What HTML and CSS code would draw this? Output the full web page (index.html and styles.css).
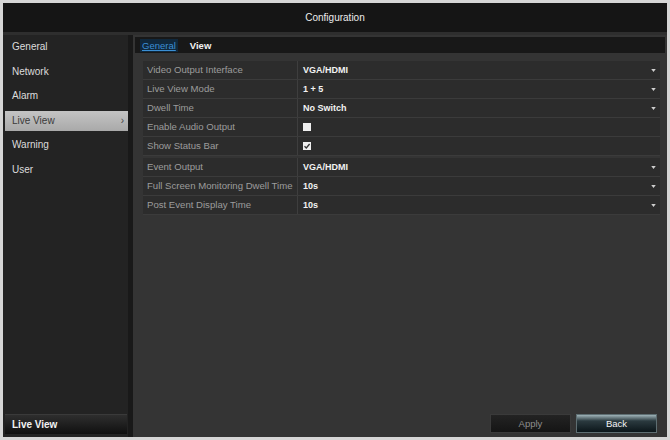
FILE: index.html
```html
<!DOCTYPE html>
<html>
<head>
<meta charset="utf-8">
<title>Configuration</title>
<link rel="stylesheet" href="styles.css">
</head>
<body>
<div class="app">
  <div class="titlebar">Configuration</div>
  <div class="body">
    <nav class="sidebar">
      <div class="nav-item">General</div>
      <div class="nav-item">Network</div>
      <div class="nav-item">Alarm</div>
      <div class="nav-item active">Live View<span class="caret">&#8250;</span></div>
      <div class="nav-item">Warning</div>
      <div class="nav-item">User</div>
      <div class="nav-footer">Live View</div>
    </nav>
    <main class="main">
      <div class="tabs">
        <span class="tab selected">General</span>
        <span class="tab">View</span>
      </div>
      <div class="group first">
        <div class="row"><div class="label">Video Output Interface</div><div class="value">VGA/HDMI<svg class="arrow" viewBox="0 0 6 4"><path d="M0 0h6L3 4z"/></svg></div></div>
        <div class="row"><div class="label">Live View Mode</div><div class="value">1 + 5<svg class="arrow" viewBox="0 0 6 4"><path d="M0 0h6L3 4z"/></svg></div></div>
        <div class="row"><div class="label">Dwell Time</div><div class="value">No Switch<svg class="arrow" viewBox="0 0 6 4"><path d="M0 0h6L3 4z"/></svg></div></div>
        <div class="row"><div class="label">Enable Audio Output</div><div class="value"><span class="check"></span></div></div>
        <div class="row"><div class="label">Show Status Bar</div><div class="value"><span class="check on"><svg viewBox="0 0 8 8"><path d="M1.5 4.2 3.3 6 6.6 2" fill="none" stroke="#333" stroke-width="1.3"/></svg></span></div></div>
      </div>
      <div class="group">
        <div class="row"><div class="label">Event Output</div><div class="value">VGA/HDMI<svg class="arrow" viewBox="0 0 6 4"><path d="M0 0h6L3 4z"/></svg></div></div>
        <div class="row"><div class="label">Full Screen Monitoring Dwell Time</div><div class="value">10s<svg class="arrow" viewBox="0 0 6 4"><path d="M0 0h6L3 4z"/></svg></div></div>
        <div class="row"><div class="label">Post Event Display Time</div><div class="value">10s<svg class="arrow" viewBox="0 0 6 4"><path d="M0 0h6L3 4z"/></svg></div></div>
      </div>
      <div class="actions">
        <button class="btn apply">Apply</button>
        <button class="btn back">Back</button>
      </div>
    </main>
  </div>
</div>
</body>
</html>
```

FILE: styles.css
```css
html, body {
  margin: 0;
  padding: 0;
}

body {
  width: 670px;
  height: 440px;
  background: #d6d6d6;
  font-family: "Liberation Sans", Arial, sans-serif;
  overflow: hidden;
}

.app {
  margin: 3px 3px 0 3px;
  width: 664px;
  height: 434px;
  display: flex;
  flex-direction: column;
  background: #1c1c1c;
}

.titlebar {
  height: 29px;
  line-height: 29px;
  text-align: center;
  color: #ececec;
  font-size: 10px;
  background: #151515;
  border-bottom: 3px solid #2e2e2e;
}

.body {
  flex: 1;
  display: flex;
  min-height: 0;
}

/* left navigation column */
.sidebar {
  width: 130px;
  background: #232323;
  border-right: 5px solid #191919;
  display: flex;
  flex-direction: column;
  gap: 4.6px;
  padding: 2px 0 3px 2px;
  box-sizing: border-box;
}

.nav-item {
  height: 20px;
  line-height: 20px;
  padding-left: 7px;
  font-size: 10px;
  color: #dcdcdc;
  position: relative;
}

.nav-item.active {
  background: linear-gradient(#c4c4c4, #a9a9a9);
  color: #3a3a3a;
}

.caret {
  position: absolute;
  right: 4px;
  top: 0;
  font-size: 10px;
  color: #444;
}

.nav-footer {
  margin-top: auto;
  height: 19px;
  line-height: 19px;
  padding-left: 7px;
  font-size: 10px;
  font-weight: bold;
  color: #f2f2f2;
  background: linear-gradient(#2e2e2e, #101010);
  border-top: 1px solid #3a3a3a;
  margin-right: 1px;
}

/* settings panel */
.main {
  flex: 1;
  background: #343434;
  display: flex;
  flex-direction: column;
  padding: 2px 2px 4px 2px;
  box-sizing: border-box;
}

.tabs {
  height: 16px;
  background: #181818;
  display: flex;
  align-items: center;
  gap: 12px;
  padding-left: 5px;
  font-size: 9.5px;
}

.tab {
  color: #f2f2f2;
  font-weight: bold;
}

.tab.selected {
  color: #3b8fd4;
  font-weight: normal;
  background: #10283c;
  padding: 1px 2px;
  text-decoration: underline;
}

.group {
  margin: 2px 5px 0 8px;
  display: flex;
  flex-direction: column;
}

.group.first {
  margin-top: 8px;
}

.row {
  display: flex;
  height: 19px;
  background: #2c2c2c;
  border-bottom: 1px solid #3b3b3b;
  box-sizing: border-box;
}

.label {
  width: 155px;
  box-sizing: border-box;
  padding-left: 4px;
  line-height: 18px;
  font-size: 9.6px;
  color: #9c9c9c;
  border-right: 1px solid #3e3e3e;
  white-space: nowrap;
  overflow: hidden;
}

.value {
  flex: 1;
  display: flex;
  align-items: center;
  padding-left: 5px;
  padding-right: 4px;
  font-size: 9px;
  font-weight: bold;
  color: #f2f2f2;
}

.arrow {
  width: 5px;
  height: 3px;
  margin-left: auto;
  fill: #cfcfcf;
}

.check {
  width: 8px;
  height: 8px;
  background: #efefef;
  display: block;
}

.check svg {
  width: 8px;
  height: 8px;
  display: block;
}

.actions {
  margin-top: auto;
  display: flex;
  justify-content: flex-end;
  gap: 5px;
  padding-right: 8px;
}

.btn {
  width: 81px;
  height: 19px;
  font-family: "Liberation Sans", Arial, sans-serif;
  font-size: 9.5px;
  border: 1px solid #3a3a3a;
  padding: 0;
}

.btn.apply {
  background: linear-gradient(#232323, #151515);
  color: #8e8e8e;
}

.btn.back {
  background: linear-gradient(#9fb3b8 0%, #2b3a3f 35%, #0c161a 100%);
  color: #f4f4f4;
  border-color: #5e6e72;
}
```
